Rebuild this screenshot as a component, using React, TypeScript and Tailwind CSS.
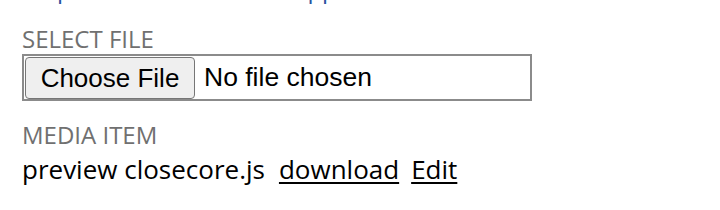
import React from "react";

export default function App() {
  return (
    <div className="w-[720px] h-[210px] overflow-hidden bg-white font-['Open_Sans',sans-serif] text-black">
      <div className="-mt-[28px] pl-[22px]">
        <div className="text-[24px] leading-[34px] text-[#2a55a0]">Map media items to the app</div>
        <div className="mt-[19px] text-[24px] leading-[28px] text-[#707070] uppercase">Select File</div>
        <div className="mt-[1px] flex h-[47px] w-[510px] items-center border-2 border-[#8b8b8b] bg-white">
          <button className="ml-px h-[42px] w-[170px] rounded-[4px] border border-[#767676] bg-[#efefef] font-['Liberation_Sans',Arial,sans-serif] text-[26px] leading-none text-black">
            Choose File
          </button>
          <span className="ml-[9px] font-['Liberation_Sans',Arial,sans-serif] text-[26.5px] leading-none text-black">No file chosen</span>
        </div>
        <div className="mt-[20px] text-[24px] leading-[28px] text-[#707070] uppercase">Media Item</div>
        <div className="mt-[3px] flex items-baseline text-[26px] leading-[34px]">
          <span>preview closecore.js</span>
          <a className="ml-[14px] underline decoration-2 underline-offset-[3px]" href="#">download</a>
          <a className="ml-[12px] underline decoration-2 underline-offset-[3px]" href="#">Edit</a>
        </div>
      </div>
    </div>
  );
}
